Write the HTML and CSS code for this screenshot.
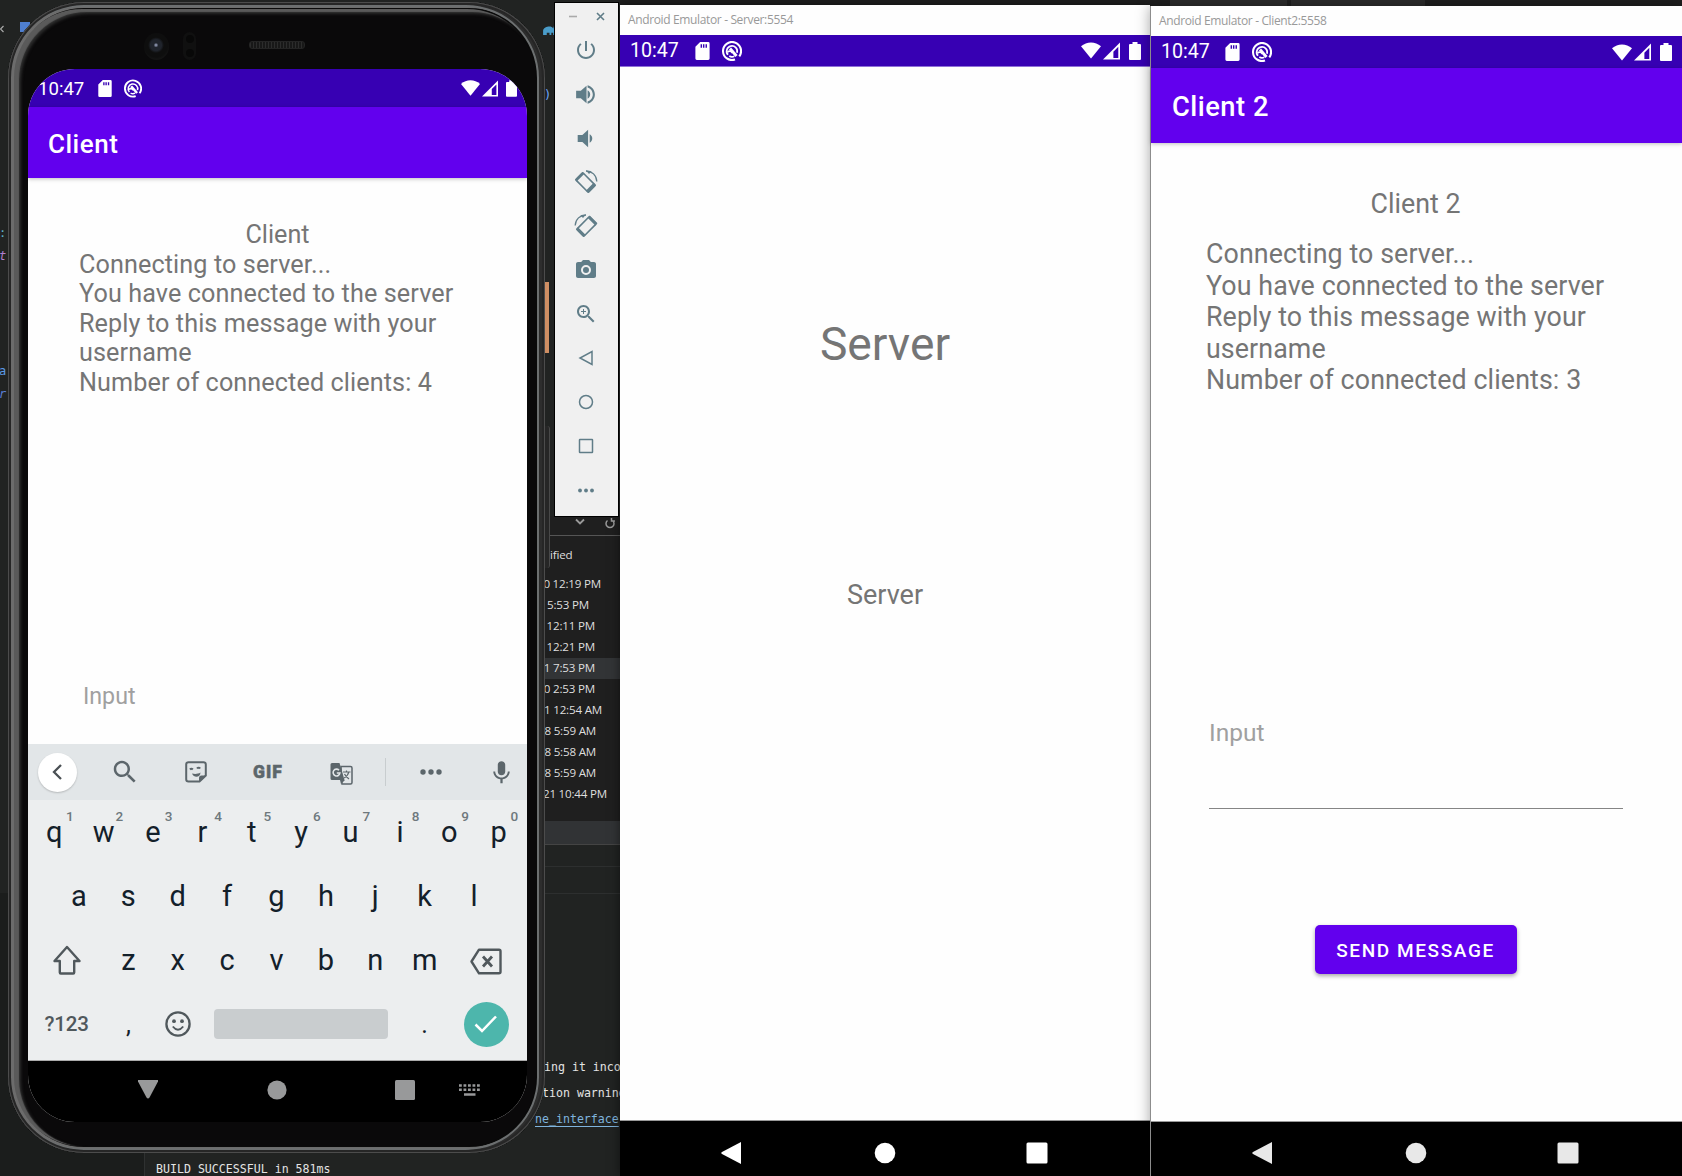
FILE: index.html
```html
<!DOCTYPE html>
<html lang="en">
<head>
<meta charset="utf-8">
<title>Android Emulators</title>
<link rel="stylesheet" href="styles.css">
</head>
<body>
<svg class="defs" width="0" height="0">
  <symbol id="sd" viewBox="0 0 15 19"><path fill="currentColor" fill-rule="evenodd" d="M5 0h8.500a1.500 1.500 0 0 1 1.500 1.500v16a1.500 1.500 0 0 1-1.500 1.500h-12a1.500 1.500 0 0 1-1.500-1.500V5zM5.500 2.500v3.500h1.500v-3.500zM8 2.500v3.500h1.500v-3.500zM10.700 2.500v3.500h1.500v-3.500z"/></symbol>
  <symbol id="qring" viewBox="0 0 20 20"><g fill="none" stroke="currentColor"><path stroke-width="2.100" d="M13 18.500A9 9 0 1 1 17.300 15.300"/><path stroke-width="1.700" d="M6 13.800A5.300 5.300 0 1 1 15 11.800"/><path stroke-width="2.800" d="M8 7.500l6.500 7.500"/><path stroke-width="1.700" d="M5.500 11c2-1.500 3.500-1 5 1"/><path stroke-width="1.600" d="M7.300 15c1.500 1 3.500 1 5 .2"/></g></symbol>
  <symbol id="wifi" viewBox="0 0 21 17"><path fill="currentColor" d="M10.500 17L0 4C6-1.300 15-1.300 21 4z"/></symbol>
  <symbol id="signal" viewBox="0 0 18 18"><path fill="currentColor" fill-rule="evenodd" d="M18 0v18H0zM16.200 4.500L11 9.700V16.300h5.200z"/></symbol>
  <symbol id="battery" viewBox="0 0 12 18"><path fill="currentColor" d="M3.500 0h5v2H11a1 1 0 0 1 1 1v14a1 1 0 0 1-1 1H1a1 1 0 0 1-1-1V3a1 1 0 0 1 1-1h2.500z"/></symbol>
</svg>

<main class="desktop">
  <div class="ide-side"></div>
  <div class="ide-tabs"><i></i><i></i></div>
  <svg class="scrap-close" width="4" height="8" viewBox="0 0 4 8"><path d="M3.500 1L.5 4l3 3" fill="none" stroke="#aaa" stroke-width="1.200"/></svg>
  <span class="scrap scrap-tab"></span>
  <span class="scrap scrap-colon">:</span>
  <span class="scrap scrap-t">t</span>
  <span class="scrap scrap-a">a</span>
  <span class="scrap scrap-r">r</span>
  <svg class="elephant" viewBox="0 0 14 12"><path fill="#4a9cc9" d="M0 12V7c1-4 9-6 11-2l1-3 1-1v11h-2V9.500H9V12H7V9.500H4V12z"/></svg>
  <span class="scrap scrap-paren">)</span>
  <div class="scroll-mark"></div>
  <pre class="build">BUILD SUCCESSFUL in 581ms</pre>

  <section class="explorer">
    <div class="address">
      <svg width="10" height="8" viewBox="0 0 10 8"><path d="M1 1.500l4 4 4-4" fill="none" stroke="#999" stroke-width="1.800"/></svg>
      <svg width="10" height="11" viewBox="0 0 10 11"><path d="M2.500 2.500a4 4 0 1 0 5 0M6.500 0v3h3.500" fill="none" stroke="#999" stroke-width="1.500"/></svg>
    </div>
    <div class="col-head">ified</div>
    <ul class="dates">
      <li class="in19">0 12:19 PM</li>
      <li class="in31">5:53 PM</li>
      <li class="in25">12:11 PM</li>
      <li class="in25">12:21 PM</li>
      <li class="in25 picked">1 7:53 PM</li>
      <li class="in25">0 2:53 PM</li>
      <li class="in18">1 12:54 AM</li>
      <li class="in24">8 5:59 AM</li>
      <li class="in24">8 5:58 AM</li>
      <li class="in24">8 5:59 AM</li>
      <li class="in13">21 10:44 PM</li>
    </ul>
    <div class="explorer-foot"></div>
  </section>
  <div class="ide-line line-a"></div>
  <div class="ide-line line-b"></div>
  <div class="console"><pre>ing it incom</pre><pre>tion warning</pre><pre class="link">ne_interface</pre></div>

  <section class="window server">
    <header class="caption">Android Emulator - Server:5554</header>
    <div class="status">
      <time>10:47</time><svg class="sd"><use href="#sd"/></svg><svg class="qring"><use href="#qring"/></svg>
      <span class="grow"></span><svg class="wifi"><use href="#wifi"/></svg><svg class="signal"><use href="#signal"/></svg><svg class="battery"><use href="#battery"/></svg>
    </div>
    <div class="content">
      <h1 class="big">Server</h1>
      <p class="small">Server</p>
    </div>
    <nav class="nav">
      <svg width="22" height="24" viewBox="0 0 22 24"><path d="M20 1v22L1 13q-1.500-1 0-2z" fill="currentColor"/></svg>
      <svg width="22" height="22" viewBox="0 0 22 22"><circle cx="11" cy="11" r="10.300" fill="currentColor"/></svg>
      <svg width="22" height="22" viewBox="0 0 22 22"><rect x=".5" y=".5" width="21" height="21" rx="1.500" fill="currentColor"/></svg>
    </nav>
  </section>

  <section class="window client2">
    <header class="caption">Android Emulator - Client2:5558</header>
    <div class="status">
      <time>10:47</time><svg class="sd"><use href="#sd"/></svg><svg class="qring"><use href="#qring"/></svg>
      <span class="grow"></span><svg class="wifi"><use href="#wifi"/></svg><svg class="signal"><use href="#signal"/></svg><svg class="battery"><use href="#battery"/></svg>
    </div>
    <div class="appbar">Client 2</div>
    <div class="content">
      <p class="heading">Client 2</p>
      <p class="log">Connecting to server...<br>You have connected to the server<br>Reply to this message with your<br>username<br>Number of connected clients: 3</p>
      <div class="field">Input</div>
      <button class="send">SEND MESSAGE</button>
    </div>
    <nav class="nav">
      <svg width="22" height="24" viewBox="0 0 22 24"><path d="M20 1v22L1 13q-1.500-1 0-2z" fill="currentColor"/></svg>
      <svg width="22" height="22" viewBox="0 0 22 22"><circle cx="11" cy="11" r="10.300" fill="currentColor"/></svg>
      <svg width="22" height="22" viewBox="0 0 22 22"><rect x=".5" y=".5" width="21" height="21" rx="1.500" fill="currentColor"/></svg>
    </nav>
  </section>

  <div class="side-button"></div>
  <section class="phone">
    <div class="bezel"></div>
    <div class="camera"></div>
    <div class="sensor"><i></i><i></i></div>
    <div class="speaker"></div>
    <div class="screen">
      <div class="status">
        <time>10:47</time><svg class="sd"><use href="#sd"/></svg><svg class="qring"><use href="#qring"/></svg>
        <span class="grow"></span><svg class="wifi"><use href="#wifi"/></svg><svg class="signal"><use href="#signal"/></svg><svg class="battery"><use href="#battery"/></svg>
      </div>
      <div class="appbar">Client</div>
      <div class="content">
        <p class="heading">Client</p>
        <p class="log">Connecting to server...<br>You have connected to the server<br>Reply to this message with your<br>username<br>Number of connected clients: 4</p>
        <div class="hint">Input</div>
      </div>
      <div class="keyboard">
        <div class="suggest">
          <span class="back"><svg width="12" height="18" viewBox="0 0 12 18"><path d="M10 2L3 9l7 7" fill="none" stroke="#4a5054" stroke-width="2.300"/></svg></span>
          <svg class="s1" width="30" height="30" viewBox="0 0 24 24"><path fill="currentColor" d="M15.500 14h-.79l-.28-.27C15.410 12.590 16 11.110 16 9.500 16 5.910 13.090 3 9.500 3S3 5.910 3 9.500 5.910 16 9.500 16c1.610 0 3.090-.59 4.230-1.570l.27.28v.79l5 4.990L20.490 19l-4.990-5zm-6 0C7.010 14 5 11.990 5 9.500S7.010 5 9.500 5 14 7.010 14 9.500 11.990 14 9.500 14z"/></svg>
          <svg class="s2" width="22" height="22" viewBox="0 0 22 22"><g fill="none" stroke="currentColor" stroke-width="2"><path d="M14.500 20.500H3.500a2.300 2.300 0 0 1-2.300-2.300V3.500a2.300 2.300 0 0 1 2.300-2.300h15a2.300 2.300 0 0 1 2.300 2.300v11z"/></g><path fill="currentColor" d="M14 21v-4a2.500 2.500 0 0 1 2.500-2.500H21zM7 12.500c3 .8 6 .5 8.500-1 0 5-6.500 6-8.500 1z"/><path d="M5 8.500c.8-.9 2-.9 2.800 0M12 7.500c.8-1 2.400-1 3.200 0" fill="none" stroke="currentColor" stroke-width="2"/></svg>
          <b class="gif">GIF</b>
          <svg class="s3" width="23" height="23" viewBox="0 0 23 23"><path d="M11 4.500h9.500a1.500 1.500 0 0 1 1.500 1.500v14.500a1.500 1.500 0 0 1-1.500 1.500H12z" fill="none" stroke="currentColor" stroke-width="1.500"/><path fill="currentColor" d="M2 1h7.500l5 17H2a1.500 1.500 0 0 1-1.500-1.500v-14A1.500 1.500 0 0 1 2 1zM10 18h5l-4 4z"/><path d="M9 8.200a3.400 3.400 0 1 0 .9 2.800H6.800" fill="none" stroke="#e2e6e8" stroke-width="1.600"/><path d="M13 10h7.500M16.500 8.500V10M18.700 10c-.5 3-2 4.500-4.500 6M14.500 12c1 2 2.500 3.500 4.500 5" fill="none" stroke="currentColor" stroke-width="1.200"/></svg>
          <i class="divider"></i>
          <svg class="s4" width="22" height="6" viewBox="0 0 22 6"><g fill="currentColor"><circle cx="3" cy="3" r="2.700"/><circle cx="11" cy="3" r="2.700"/><circle cx="19" cy="3" r="2.700"/></g></svg>
          <svg class="s5" width="27" height="27" viewBox="0 0 24 24"><path fill="currentColor" d="M12 14.500c2 0 3.300-1.500 3.300-3.200V5.100C15.300 3.300 13.800 2 12 2S8.700 3.300 8.700 5.100v6.200c0 1.700 1.300 3.200 3.300 3.200zm5.600-3.500c0 3-2.600 5.400-5.600 5.400S6.400 14 6.400 11H4.700c0 3.600 2.800 6.430 6.300 6.920V21.500h2v-3.580c3.500-.49 6.300-3.320 6.300-6.920h-1.700z"/></svg>
        </div>
        <div class="keys row1"><span>q<sup>1</sup></span><span>w<sup>2</sup></span><span>e<sup>3</sup></span><span>r<sup>4</sup></span><span>t<sup>5</sup></span><span>y<sup>6</sup></span><span>u<sup>7</sup></span><span>i<sup>8</sup></span><span>o<sup>9</sup></span><span>p<sup>0</sup></span></div>
        <div class="keys row2"><span>a</span><span>s</span><span>d</span><span>f</span><span>g</span><span>h</span><span>j</span><span>k</span><span>l</span></div>
        <div class="keys row3">
          <span class="wide"><svg width="30" height="30" viewBox="0 0 30 30"><path d="M15 2L2.500 16h5.300V27.500q0 1 1 1h12.400q1 0 1-1V16h5.300z" fill="none" stroke="#50585c" stroke-width="2.400" stroke-linejoin="round"/></svg></span>
          <span>z</span><span>x</span><span>c</span><span>v</span><span>b</span><span>n</span><span>m</span>
          <span class="wide"><svg class="erase" width="32" height="27" viewBox="0 0 32 27"><path d="M9 1.700h20q1.500 0 1.500 1.500v20.600q0 1.500-1.500 1.500H9L1.500 13.500z" fill="none" stroke="#50585c" stroke-width="2.400" stroke-linejoin="round"/><path d="M13 8.500l9 10M22 8.500l-9 10" stroke="#50585c" stroke-width="2.800"/></svg></span>
        </div>
        <div class="keys row4">
          <span class="wide sym">?123</span><span class="punct">,</span>
          <span><svg width="26" height="26" viewBox="0 0 26 26"><circle cx="13" cy="13" r="11.600" fill="none" stroke="#50585c" stroke-width="2.300"/><circle cx="9" cy="10.200" r="1.900" fill="#50585c"/><circle cx="17" cy="10.200" r="1.900" fill="#50585c"/><path d="M7.800 15.500q5.200 6.500 10.400 0" fill="none" stroke="#50585c" stroke-width="2"/></svg></span>
          <span class="space"><i></i></span><span class="punct">.</span>
          <span class="wide"><b class="done"><svg width="24" height="18" viewBox="0 0 24 18"><path d="M1.500 9.500l6.500 6.500L22 1.500" fill="none" stroke="#fff" stroke-width="2.500"/></svg></b></span>
        </div>
      </div>
      <nav class="nav">
        <svg width="20" height="19" viewBox="0 0 20 19"><path d="M0 0h20v1.500L11.500 17.500q-1.500 2-3 0L0 1.500z" fill="currentColor"/></svg>
        <svg width="20" height="20" viewBox="0 0 20 20"><circle cx="10" cy="10" r="9.600" fill="currentColor"/></svg>
        <svg width="20" height="20" viewBox="0 0 20 20"><rect width="20" height="20" rx="1.500" fill="currentColor"/></svg>
        <svg class="kb" width="21" height="12" viewBox="0 0 21 12"><path d="M0 1.500h21M0 5.700h21" stroke="currentColor" stroke-width="2.600" stroke-dasharray="2.800 1.700"/><path d="M5 10.500h11.500" stroke="currentColor" stroke-width="2.400"/></svg>
      </nav>
    </div>
  </section>

  <aside class="toolbar">
    <div class="win-buttons">
      <svg width="9" height="9" viewBox="0 0 9 9"><path d="M0 4.500h8" stroke="#aaa" stroke-width="1.600"/></svg>
      <svg width="9" height="9" viewBox="0 0 9 9"><path d="M1 1l7 7M8 1L1 8" stroke="#607d88" stroke-width="1.600"/></svg>
    </div>
    <span><svg width="24" height="24" viewBox="0 0 24 24"><path fill="currentColor" d="M13 3h-2v10h2V3zm4.830 2.170l-1.420 1.420C17.990 7.860 19 9.810 19 12c0 3.870-3.130 7-7 7s-7-3.130-7-7c0-2.190 1.010-4.140 2.580-5.420L6.170 5.170C4.230 6.820 3 9.260 3 12c0 4.970 4.030 9 9 9s9-4.030 9-9c0-2.740-1.230-5.180-3.170-6.830z"/></svg></span>
    <span><svg width="25" height="25" viewBox="0 0 24 24"><path fill="currentColor" d="M3 8.500v7h4.500l5.500 5V3.500l-5.500 5H3zm13.500 3.500c0-1.770-1.020-3.290-2.500-4.030v8.050c1.480-.73 2.500-2.250 2.500-4.020zM14 3.230v2.060c2.890.86 5 3.540 5 6.710s-2.110 5.850-5 6.710v2.060c4.010-.91 7-4.490 7-8.770s-2.990-7.860-7-8.770z"/></svg></span>
    <span><svg width="25" height="25" viewBox="0 0 24 24"><path fill="currentColor" d="M18.500 12c0-1.770-1.020-3.290-2.500-4.030v8.050c1.480-.73 2.500-2.250 2.500-4.020zM4.500 8.700v6.600H9l5.500 5V3.700L9 8.700z"/></svg></span>
    <span><svg width="24" height="24" viewBox="0 0 24 24"><g transform="rotate(-45 11.500 12.500)"><rect x="6.500" y="3.500" width="10" height="18" rx="1" fill="none" stroke="currentColor" stroke-width="1.600"/><path d="M6 3h11v2.500H6zM6 18.500h11V22H6z" fill="currentColor"/></g><path d="M12 1c6 .2 10.500 4 10.800 10.500" fill="none" stroke="currentColor" stroke-width="1.300"/><path d="M12 .5l5.500 1L15 4z" fill="currentColor"/></svg></span>
    <span><svg width="24" height="24" viewBox="0 0 24 24"><g transform="translate(24 0) scale(-1 1)"><g transform="rotate(-45 11.500 12.500)"><rect x="6.500" y="3.500" width="10" height="18" rx="1" fill="none" stroke="currentColor" stroke-width="1.600"/><path d="M6 2.500h11v3H6zM6 19h11v3H6z" fill="currentColor"/></g><path d="M12 1c6 .2 10.500 4 10.800 10.500" fill="none" stroke="currentColor" stroke-width="1.300"/><path d="M12 .5l5.500 1L15 4z" fill="currentColor"/></g></svg></span>
    <span><svg width="24" height="24" viewBox="0 0 24 24"><path fill="currentColor" fill-rule="evenodd" d="M9 2L7.170 4H4c-1.100 0-2 .9-2 2v12c0 1.100.9 2 2 2h16c1.100 0 2-.9 2-2V6c0-1.100-.9-2-2-2h-3.170L15 2H9zM12 7a5 5 0 1 0 0 10 5 5 0 0 0 0-10z"/><circle cx="12" cy="12" r="3" fill="currentColor"/></svg></span>
    <span><svg width="24" height="24" viewBox="0 0 24 24"><path fill="currentColor" d="M15.500 14h-.79l-.28-.27C15.410 12.590 16 11.110 16 9.500 16 5.910 13.090 3 9.500 3S3 5.910 3 9.500 5.910 16 9.500 16c1.610 0 3.090-.59 4.230-1.570l.27.28v.79l5 4.990L20.490 19l-4.990-5zm-6 0C7.010 14 5 11.990 5 9.500S7.010 5 9.500 5 14 7.010 14 9.500 11.990 14 9.500 14zM10 7H9v2H7v1h2v2h1v-2h2V9h-2V7z"/></svg></span>
    <span><svg width="16" height="16" viewBox="0 0 16 16"><path d="M14 1.500v13L2 8z" fill="none" stroke="currentColor" stroke-width="1.500"/></svg></span>
    <span><svg width="16" height="16" viewBox="0 0 16 16"><circle cx="8" cy="8" r="6.500" fill="none" stroke="currentColor" stroke-width="1.500"/></svg></span>
    <span><svg width="16" height="16" viewBox="0 0 16 16"><rect x="1.500" y="1.500" width="13" height="13" rx=".5" fill="none" stroke="currentColor" stroke-width="1.500"/></svg></span>
    <span><svg width="16" height="5" viewBox="0 0 16 5"><g fill="currentColor"><circle cx="2" cy="2.500" r="1.900"/><circle cx="8" cy="2.500" r="1.900"/><circle cx="14" cy="2.500" r="1.900"/></g></svg></span>
  </aside>
</main>
</body>
</html>
```
FILE: styles.css
```css
* { box-sizing: border-box; }
body { margin: 0; font-family: Roboto, sans-serif; }
p, h1, ul, pre { margin: 0; padding: 0; }
svg { display: block; flex: none; }
.defs { position: absolute; }

.desktop { position: relative; width: 1682px; height: 1176px; overflow: hidden; background: #212322; }

/* editor behind the emulators */
.ide-side { position: absolute; left: 0; top: 893px; width: 145px; height: 283px; background: #1b1d1c; border-right: 1px solid #2f3131; }
.ide-tabs { position: absolute; left: 620px; top: 0; width: 1062px; height: 6px; background: #1f1f1f; display: flex; gap: 4px; padding-left: 550px; }
.ide-tabs i { width: 117px; background: #2d2d2d; }
.ide-tabs i + i { width: 134px; }
.scrap { position: absolute; font: 12px "DejaVu Sans Mono", monospace; }
.scrap-close { position: absolute; left: 0; top: 25px; }
.scrap-tab { left: 20px; top: 22px; width: 10px; height: 10px; background: #4f7fd0; }
.scrap-colon { left: -1px; top: 226px; color: #5fb3c9; }
.scrap-t { left: -1px; top: 249px; color: #b07fd0; font-style: italic; }
.scrap-a { left: -1px; top: 364px; color: #5c9ae6; }
.scrap-r { left: -1px; top: 387px; color: #5c7fd6; font-style: italic; }
.scrap-paren { left: 544px; top: 88px; color: #6fa8ff; }
.elephant { position: absolute; left: 543px; top: 24px; width: 13px; height: 11px; }
.scroll-mark { position: absolute; left: 545px; top: 282px; width: 4px; height: 71px; background: #cf8e63; }
pre { font: 11.6px/14px "DejaVu Sans Mono", monospace; color: #e4e4e4; }
.build { position: absolute; left: 156px; top: 1163px; height: 13px; line-height: 13px; }
.ide-line { position: absolute; left: 545px; width: 75px; height: 1px; background: #2d2f2f; }
.line-a { top: 866px; }
.line-b { top: 893px; }
.console { position: absolute; left: 530px; top: 1060px; width: 90px; overflow: hidden; display: flex; flex-direction: column; gap: 12px; padding: 0 0 3px 12px; }
.console pre:first-child { margin-left: 2px; }
.console .link { color: #7fb3dd; margin-left: -7px; text-decoration: underline; text-underline-offset: 3px; }

.explorer { position: absolute; left: 545px; top: 516px; width: 75px; height: 329px; overflow: hidden; background: #1f1f1f; color: #dedede; font: 11.6px "Open Sans", sans-serif; letter-spacing: -.2px; }
.address { height: 20px; display: flex; justify-content: flex-end; align-items: flex-start; gap: 20px; padding: 2px 5px 0 0; border-bottom: 1px solid #555; }
.col-head { height: 38px; line-height: 38px; padding: 0 0 0 5px; }
.dates { list-style: none; }
.dates li { height: 21px; line-height: 20px; display: flex; justify-content: flex-end; white-space: nowrap; }
.picked { background: #323436; }
.in13 { padding-right: 13px; } .in18 { padding-right: 18px; } .in19 { padding-right: 19px; }
.in24 { padding-right: 24px; } .in25 { padding-right: 25px; } .in31 { padding-right: 31px; }
.explorer-foot { margin-top: 16px; height: 24px; background: #313335; border-bottom: 1px solid #444; }

/* emulator windows */
.window { position: absolute; display: flex; flex-direction: column; background: #fefefe; color: #757575; }
.server { left: 620px; top: 5px; width: 530px; height: 1171px; box-shadow: 0 0 10px rgba(0,0,0,.5); }
.client2 { left: 1151px; top: 6px; width: 531px; height: 1170px; box-shadow: -1px 0 0 #8c8c8c, 0 0 14px rgba(0,0,0,.4); }
.caption { height: 30px; padding-left: 8px; font: 12px/30px "Open Sans", sans-serif; letter-spacing: -.36px; color: #999; }
.status { height: 32px; flex: none; background: #3700b3; color: #fff; display: flex; align-items: center; padding: 0 9px 0 10px; }
.status time { font-size: 19.600px; line-height: 32px; width: 65px; }
.status .sd { width: 15px; height: 18px; margin-right: 12px; }
.status .qring { width: 20px; height: 20px; }
.client2 .status { padding-right: 10px; }
.client2 .status .sd { margin-left: -1px; }
.grow { flex: 1; }
.status .wifi { width: 20px; height: 17px; margin-right: 2px; }
.status .signal { width: 17px; height: 18px; margin-right: 9px; }
.status .battery { width: 12px; height: 18px; }
.content { flex: 1; display: flex; flex-direction: column; }
.appbar { background: #6200ee; color: #fff; font-weight: 500; flex: none; position: relative; box-shadow: 0 1px 4px rgba(0,0,0,.25); }
.nav { background: #000; display: flex; flex: none; justify-content: center; align-items: center; }
.window .nav { height: 56px; gap: 130.500px; border-top: 1px solid #999; padding: 8px 1px 0 0; color: #fff; }
.client2 .nav { height: 55px; color: #e8e8e8; padding-right: 2px; }
.server .status { border-bottom: 1px solid #8f70d8; }
.big { font-size: 46.200px; line-height: 54px; font-weight: 400; text-align: center; margin-top: 250px; }
.small { font-size: 27px; line-height: 32px; text-align: center; margin-top: 208px; }
.client2 .appbar { height: 75px; line-height: 78px; padding-left: 21px; font-size: 27.300px; letter-spacing: .5px; }
.client2 .heading { font-size: 26.800px; line-height: 31.400px; text-align: center; margin-top: 46px; padding-right: 2px; }
.client2 .log { font-size: 26.800px; line-height: 31.400px; letter-spacing: .1px; padding-left: 55px; margin-top: 19px; white-space: nowrap; }
.field { margin: 322px 59px 0 58px; height: 91px; border-bottom: 1.500px solid #858585; font-size: 24.500px; line-height: 29px; color: #a0a0a0; }
.send { align-self: center; margin: 116px 2px 0 0; width: 202px; height: 49px; border: 0; border-radius: 5px; background: #6200ee; color: #fff; font: 500 19px Roboto, sans-serif; letter-spacing: 1.600px; padding: 2px 0 0; box-shadow: 0 2px 4px rgba(0,0,0,.35); white-space: nowrap; }

/* framed phone */
.side-button { position: absolute; left: 543px; top: 426px; width: 7px; height: 142px; background: #262626; border-right: 1px solid #484848; border-radius: 0 3px 3px 0; }
.phone { position: absolute; left: 8px; top: 2px; width: 537px; height: 1151px; border-radius: 76px; background: #0a090a; padding: 67px 18px 30px 20px; overflow: hidden; }
.bezel { position: absolute; inset: 0; border-radius: 76px; box-shadow: inset 0 0 0 1px #4c4c4c, inset 0 0 0 3px #262626, inset -3px 0 0 3px #2d2d2d, inset -3px 0 0 5px #6c6f70, inset 0 0 0 6px #6c6c6c, inset -2px 0 0 7px #0a0a0a, inset 3px 2px 1px 8px #5a5a5a, inset 5px 4px 3px 8px #2c2c2c; }
.camera { position: absolute; left: 136px; top: 31px; width: 25px; height: 27px; border-radius: 50%; background: radial-gradient(circle at 48% 45%, #8088a0 0 4%, #20242c 12% 28%, #0e0e0e 40% 60%, #131313 70%); }
.sensor { position: absolute; left: 175px; top: 30px; width: 13px; height: 28px; border-radius: 7px; background: #101010; display: flex; flex-direction: column; justify-content: space-between; align-items: center; padding: 3px; }
.sensor i { width: 8px; height: 8px; border-radius: 50%; background: #080808; }
.speaker { position: absolute; left: 241px; top: 39px; width: 56px; height: 8px; border-radius: 3px; background: repeating-linear-gradient(90deg, #2c2c2c 0 1px, #181818 1px 3px); border: 1px solid #242424; }
.screen { position: relative; height: 1053px; border-radius: 47px; overflow: hidden; background: #fefefe; color: #757575; display: flex; flex-direction: column; }
.phone .status { height: 38px; padding: 0 10px 0 10px; }
.phone .status time { font-size: 18.600px; width: 60px; line-height: 38px; padding-top: 1px; }
.phone .status .sd { width: 14px; height: 17px; margin-right: 12px; }
.phone .status .qring { width: 18px; height: 19px; }
.phone .status .wifi { width: 19px; height: 16px; margin-right: 2px; }
.phone .status .signal { width: 16px; height: 17px; margin-right: 8px; }
.phone .status .battery { width: 11px; height: 17px; }
.phone .appbar { height: 71px; line-height: 75px; padding-left: 20px; font-size: 26px; letter-spacing: .5px; }
.phone .heading { font-size: 25.200px; line-height: 29.600px; text-align: center; margin-top: 42px; }
.phone .log { font-size: 25.200px; line-height: 29.600px; letter-spacing: .1px; padding-left: 51px; white-space: nowrap; }
.hint { margin: 285px 0 0 55px; font-size: 23.200px; line-height: 27px; color: #a0a0a0; }
.keyboard { height: 317px; flex: none; background: #eceeef; border-bottom: 1px solid #aaa; color: #13202a; }
.suggest { height: 56px; background: #e2e6e8; display: flex; align-items: center; color: #5c666b; }
.back { width: 39px; height: 39px; margin-left: 9.500px; border-radius: 50%; background: #fff; display: flex; align-items: center; justify-content: center; box-shadow: 0 1px 2px rgba(0,0,0,.2); }
.s1 { margin-left: 33px; } .s2 { margin-left: 45.500px; }
.gif { width: 30px; margin-left: 46px; font: 900 17.500px Roboto, sans-serif; letter-spacing: 1px; -webkit-text-stroke: .5px; }
.s3 { margin-left: 47px; margin-top: 3px; }
.divider { width: 1px; height: 28px; background: #c8cdcf; margin-left: 32px; }
.s4 { margin-left: 34px; } .s5 { margin-left: 45.500px; }
.keys { display: flex; justify-content: center; height: 64px; font-size: 29px; line-height: 64px; padding-right: 2px; }
.keys span { width: 49.400px; position: relative; display: flex; align-items: center; justify-content: center; }
.keys sup { position: absolute; left: 36.500px; top: 6px; font-size: 13.500px; line-height: 20px; color: #6e787d; font-weight: 500; }
.keys .wide { width: 74px; }
.erase { margin-top: 2px; }
.keys .sym { font-size: 20.500px; color: #50585c; font-weight: 500; letter-spacing: -.2px; }
.keys .punct { padding-top: 2px; font-size: 25px; }
.keys .space { width: 197.500px; }
.space i { width: 174px; height: 30px; border-radius: 4px; background: #c9cdcf; }
.done { width: 45px; height: 45px; border-radius: 50%; background: #4db6ac; display: flex; align-items: center; justify-content: center; }
.phone .nav { height: 61px; color: #98999a; gap: 108.500px; padding: 0 0 4px 63px; }
.phone .nav .kb { margin-left: -65px; }

/* emulator controls */
.toolbar { position: absolute; left: 554px; top: 2px; width: 65px; height: 515px; border: 1px solid #000; background: #f0f0f0; color: #607d88; display: flex; flex-direction: column; }
.toolbar span { height: 44px; display: flex; align-items: center; justify-content: center; padding-right: 2px; }
.win-buttons { height: 25px; display: flex; align-items: center; gap: 18px; padding: 2px 0 0 14px; }
```
